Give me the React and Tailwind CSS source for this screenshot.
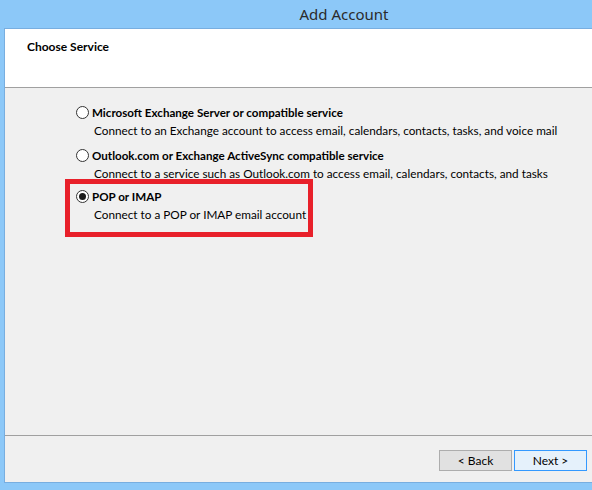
import React from "react";

function Radio({ checked }) {
  return (
    <span className="relative flex h-[13px] w-[13px] shrink-0 items-center justify-center rounded-full border border-[#333] bg-white">
      {checked && <span className="h-[7px] w-[7px] rounded-full bg-[#1a1a1a]" />}
    </span>
  );
}

function Option({ label, desc, checked }) {
  return (
    <div className="flex flex-col whitespace-nowrap">
      <div className="flex items-center gap-[3px] h-[17px]">
        <Radio checked={checked} />
        <span className="font-bold text-[11.6px] text-black leading-[17px]">{label}</span>
      </div>
      <div className="pl-[18px] text-[11.75px] text-black leading-[17px] mt-[1px]">{desc}</div>
    </div>
  );
}

export default function App() {
  return (
    <div
      className="flex h-[490px] w-[592px] flex-col overflow-hidden bg-[#8cc8f8]"
      style={{ fontFamily: 'Lato, "Noto Sans", sans-serif' }}
    >
      <div
        className="flex h-[28px] shrink-0 items-center justify-center pl-[96px] text-[15px] text-[#2b2b2b]"
        style={{ fontFamily: '"Noto Sans", sans-serif' }}
      >
        Add Account
      </div>
      <div className="flex flex-1 pl-[4px] pb-[7px]">
        <div className="flex flex-1 flex-col border-l border-t border-b border-[#78aee0]">
          <div className="h-[58px] shrink-0 bg-white pl-[22px] pt-[9px] text-[12px] font-bold text-black">
            Choose Service
          </div>
          <div className="h-[1px] bg-[#a0a0a0]" />
          <div className="flex flex-1 flex-col bg-[#f0f0f0]">
            <div className="flex flex-col pl-[71px] pt-[16px]">
              <Option
                label="Microsoft Exchange Server or compatible service"
                desc="Connect to an Exchange account to access email, calendars, contacts, tasks, and voice mail"
              />
              <div className="h-[8px]" />
              <Option
                label="Outlook.com or Exchange ActiveSync compatible service"
                desc="Connect to a service such as Outlook.com to access email, calendars, contacts, and tasks"
              />
              <div className="relative -mt-[3px] -ml-[11px] w-[248px] h-[58px] border-[5px] border-[#e8202a] pl-[6px] pt-[4px]">
                <Option checked label="POP or IMAP" desc="Connect to a POP or IMAP email account" />
              </div>
            </div>
            <div className="flex-1" />
            <div className="h-[1px] bg-[#a0a0a0]" />
            <div className="flex h-[46px] justify-end gap-[2px] pr-[5px] pt-[14px]">
              <button className="h-[21px] w-[73px] border border-[#adadad] bg-[#e1e1e1] text-[12px] text-black">
                &lt; Back
              </button>
              <button className="h-[21px] w-[73px] border border-[#3399ff] bg-[#e5f1fb] text-[12px] text-black">
                Next &gt;
              </button>
            </div>
          </div>
        </div>
      </div>
    </div>
  );
}
